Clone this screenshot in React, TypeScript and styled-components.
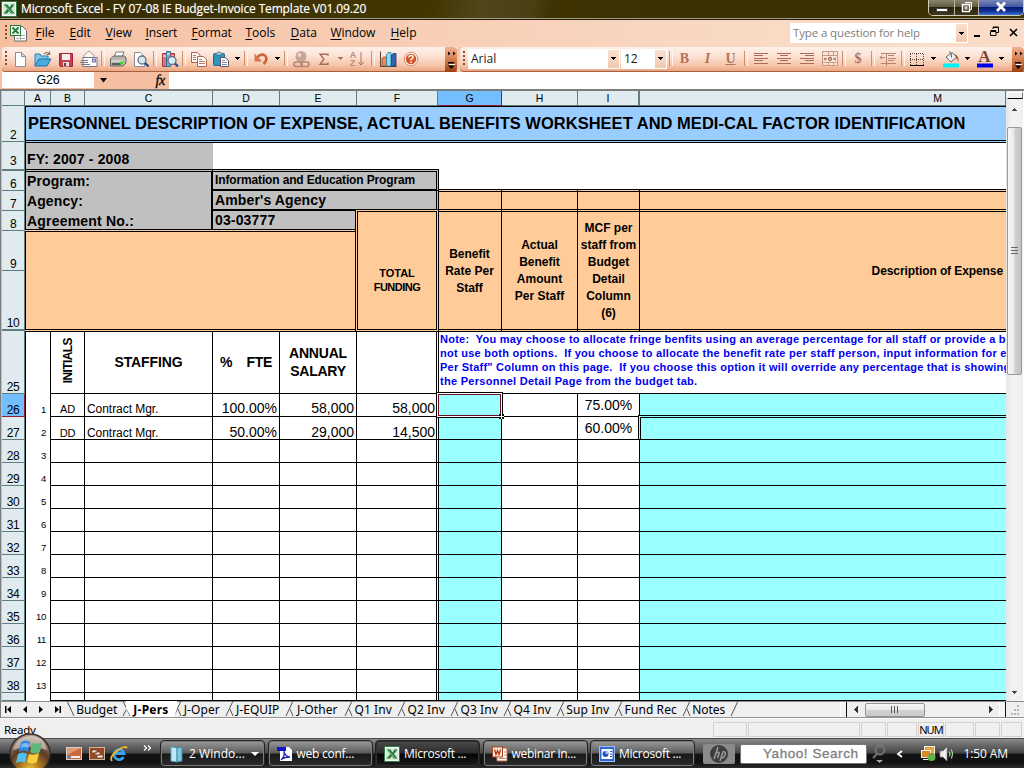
import React from "react";
import styled, { createGlobalStyle } from "styled-components";

const GlobalStyle = createGlobalStyle`
  * { box-sizing: border-box; }
  body { margin: 0; overflow: hidden; background: #efefef; }
  svg { display: block; flex: none; }
`;

const arial = `"Liberation Sans", Arial, sans-serif`;
const segoe = `"Open Sans", "Segoe UI", sans-serif`;
const tahoma = `"Noto Sans", Tahoma, sans-serif`;

const Window = styled.div`
  width: 1024px;
  height: 768px;
  display: flex;
  flex-direction: column;
  overflow: hidden;
  font-family: ${arial};
  color: #000;
  white-space: pre;
`;

const Txt = styled.span<{ $ls?: number }>`
  letter-spacing: ${(p) => p.$ls ?? 0}px;
  white-space: pre;
`;

/* ---------- title bar ---------- */
const TitleBar = styled.header`
  height: 20px;
  flex: none;
  display: flex;
  align-items: flex-start;
  background: linear-gradient(100deg, #30280a 0, #3d3202 22%, #413500 42%, #50461a 47%, #4a3f12 52%, #3d3200 54%, #3a2f00 80%, #3d3302 100%);
  border-bottom: 1px solid #1c1808;
  box-shadow: inset 0 -1px 0 #a59d86;
  padding-left: 1px;
`;
const TitleText = styled.h1`
  margin: 0 0 0 4px;
  flex: 1;
  font: 400 12px/18px ${segoe};
  letter-spacing: -0.155px;
  color: #fff;
  text-shadow: 0 0 1px rgba(255, 255, 255, 0.5);
`;
const CaptionButtons = styled.div`
  display: flex;
  width: 96px;
  height: 16px;
  border: 1px solid #cfcbbd;
  border-top: 0;
  border-radius: 0 0 5px 5px;
  overflow: hidden;
  box-shadow: inset 0 0 0 1px #1d1a0c;
`;
const CaptionButton = styled.div<{ $w: number; $close?: boolean }>`
  width: ${(p) => p.$w}px;
  display: flex;
  justify-content: center;
  border-right: 1px solid ${(p) => (p.$close ? "transparent" : "#b9b6a8")};
  background: ${(p) =>
    p.$close
      ? "linear-gradient(#7787b8 0, #4558a0 45%, #061b77 50%, #12308f 75%, #3e74d8 100%)"
      : "linear-gradient(#8a8471 0, #625b41 45%, #2a230a 50%, #3e371d 100%)"};
`;

/* ---------- menu bar ---------- */
const MenuBar = styled.nav`
  height: 27px;
  flex: none;
  display: flex;
  align-items: flex-start;
  background: linear-gradient(90deg, #f5bfa0 0, #f8ccb3 35%, #f9dac5 75%, #fadcc8 100%);
  font: 400 12px/25px ${segoe};
  padding-left: 4px;
`;
const DocIcon = styled.div`
  width: 31.500px;
  padding-top: 4px;
`;
const MenuItem = styled.div<{ $w: number; $ls: number }>`
  width: ${(p) => p.$w}px;
  letter-spacing: ${(p) => p.$ls}px;
  height: 27px;
  u { text-underline-offset: 2px; }
`;
const Spacer = styled.div`flex: 1;`;
const HelpBox = styled.div`
  width: 178px;
  height: 20px;
  margin-top: 3px;
  padding: 0 0 0 2px;
  display: flex;
  justify-content: space-between;
  background: #fff;
  border: 1px solid #fff;
  font-size: 11.5px;
  line-height: 17px;
  letter-spacing: -0.12px;
  color: #7d7d7d;
`;
const DropCap = styled.div<{ $h?: number }>`
  width: 11px;
  height: ${(p) => p.$h ?? 18}px;
  flex: none;
  display: flex;
  align-items: center;
  justify-content: center;
  background: linear-gradient(#fae0cf, #f1c8ae);
`;
const DocButtons = styled.div`
  width: 56px;
  padding: 3px 0 0 2px;
`;

/* ---------- toolbars ---------- */
const ToolbarRow = styled.div`
  height: 25px;
  flex: none;
  display: flex;
  background: #f6c6aa;
  padding-left: 2px;
`;
const Toolbar = styled.div<{ $w: number }>`
  width: ${(p) => p.$w}px;
  height: 25px;
  display: flex;
  align-items: center;
  padding-bottom: 1px;
  border-radius: 4px 0 0 4px;
  background: linear-gradient(#fef1e9 0, #fce4d6 35%, #f6c7ab 75%, #eaa682 100%);
  border-bottom: 1px solid #a85f3b;
`;
const Slot = styled.div<{ $w: number }>`
  width: ${(p) => p.$w}px;
  flex: none;
  display: flex;
  justify-content: center;
  align-items: center;
`;
const Sep = styled.i<{ $w?: number }>`
  width: ${(p) => p.$w ?? 6}px;
  height: 15px;
  flex: none;
  display: flex;
  justify-content: center;
  &::after { content: ""; width: 2px; border-left: 1px solid #cd9272; border-right: 1px solid #fff5ee; }
`;
const Grip = styled.i<{ $w?: number }>`
  width: ${(p) => p.$w ?? 6}px;
  height: 15px;
  flex: none;
  background: repeating-linear-gradient(#8e4c2e 0 2px, transparent 2px 4px) 3px 0 / 2px 14px no-repeat;
`;
const Overflow = styled.div`
  width: 12px;
  height: 25px;
  flex: none;
  margin-left: auto;
  margin-bottom: -1px;
  border-radius: 0 4px 4px 0;
  background: linear-gradient(#f2b28f 0, #d98457 45%, #993f10 100%);
`;
const ComboBox = styled.div<{ $w: number }>`
  width: ${(p) => p.$w}px;
  height: 20px;
  flex: none;
  display: flex;
  justify-content: space-between;
  border: 1px solid #fff;
  background: #fff;
  padding-left: 2px;
  margin-right: 1px;
  font: 400 12px/17px ${segoe};
  color: #221818;
`;
const Letter = styled.span<{ $i?: boolean; $u?: boolean }>`
  font: ${(p) => (p.$i ? "italic " : "")}700 14px/18px "Liberation Serif", serif;
  text-decoration: ${(p) => (p.$u ? "underline" : "none")};
  color: #b5715c;
`;

/* ---------- formula bar ---------- */
const FormulaBar = styled.div`
  height: 17px;
  flex: none;
  display: flex;
  background: #f5bfa2;
  padding-left: 2px;
`;
const NameBox = styled.div`
  width: 92px;
  height: 16px;
  background: #fff;
  text-align: center;
  font: 400 12.5px/17px ${arial};
  letter-spacing: -0.2px;
`;
const FormulaTools = styled.div`
  width: 75px;
  display: flex;
  align-items: center;
  justify-content: space-between;
  padding: 0 4px 0 5px;
  font: italic 400 14px/15px "Liberation Serif", serif;
  -webkit-text-stroke: 0.3px #000;
`;
const FormulaInput = styled.div`flex: 1; background: #fff;`;

/* ---------- worksheet ---------- */
const Work = styled.main`
  height: 612px;
  flex: none;
  display: flex;
  border-top: 2px solid #7c7c7c;
  border-left: 1px solid #7c7c7c;
  background: #fff;
`;
const Sheet = styled.div`
  width: 1005px;
  height: 610px;
  overflow: hidden;
  display: grid;
  position: relative;
  border-left: 1px solid #b7c7c9;
  grid-template-columns: 23px 26px 34px 128px 67px 77px 81px 64px 76px 62px 366px;
  grid-template-rows: 15px 36px 29px 20px 20px 20px 40px 60px 63px repeat(13, 23px) 8px;
`;
const Head = styled.div<{ $on?: boolean; $thick?: boolean }>`
  background: ${(p) => (p.$on ? "#72beff" : "#dfebef")};
  border-right: ${(p) => (p.$thick ? 2 : 1)}px solid ${(p) => (p.$on ? "#8d1f30" : "#5f7c7e")};
  border-bottom: 1px solid ${(p) => (p.$on ? "#8d1f30" : "#5f7c7e")};
  font: 400 10.5px/14px ${arial};
  text-align: center;
`;
const RowHead = styled(Head)<{ $raise?: boolean }>`
  border-right-width: 1px;
  border-bottom-width: ${(p) => (p.$thick ? 2 : 1)}px;
  display: flex;
  align-items: flex-end;
  justify-content: center;
  padding-bottom: ${(p) => (p.$raise ? 2 : 0)}px;
  font-size: 12px;
  line-height: 12px;
  letter-spacing: -0.5px;
`;

type CellProps = {
  $at: string;
  $bg?: string;
  $b?: string;
  $m?: string;
  $p?: string;
  $j?: string;
  $a?: string;
  $size?: number;
  $lh?: number;
  $bold?: boolean;
  $z?: number;
  $color?: string;
};
const Cell = styled.div<CellProps>`
  grid-area: ${(p) => p.$at};
  background: ${(p) => p.$bg ?? "transparent"};
  border-style: solid;
  border-color: #000;
  border-width: ${(p) => p.$b ?? "0 1px 1px 0"};
  margin: ${(p) => p.$m ?? 0};
  padding: ${(p) => p.$p ?? 0};
  display: flex;
  flex-direction: column;
  align-items: ${(p) => p.$j ?? "center"};
  justify-content: ${(p) => p.$a ?? "center"};
  font-size: ${(p) => p.$size ?? 14}px;
  line-height: ${(p) => (p.$lh ? p.$lh + "px" : 1.15)};
  font-weight: ${(p) => (p.$bold ? 700 : 400)};
  color: ${(p) => p.$color ?? "#000"};
  z-index: ${(p) => p.$z ?? 0};
  min-width: 0;
  min-height: 0;
  overflow: hidden;
`;
/* Any edge given 3px is drawn as two 1px rules with the fill between them. */
const DoubleCell = styled(Cell)`
  border-style: double;
`;
const Vertical = styled.span`
  writing-mode: vertical-rl;
  transform: rotate(180deg);
  font-size: 12px;
  line-height: 14px;
  letter-spacing: -0.6px;
`;
const Selection = styled.div`
  grid-area: 10 / 8;
  margin: -2px -1px -1px -2px;
  border: 1px solid #000;
  box-shadow: inset 0 0 0 1px #fff, inset 0 0 0 2px #6d1020;
  z-index: 6;
  position: relative;
  &::after {
    content: "";
    position: absolute;
    right: -2px;
    bottom: -2px;
    width: 5px;
    height: 5px;
    background: linear-gradient(#fff, #fff) center / 5px 1px no-repeat, linear-gradient(#fff, #fff) center / 1px 5px no-repeat, #000;
  }
`;

/* ---------- scrollbars ---------- */
const VScroll = styled.div`
  width: 17px;
  height: 610px;
  display: flex;
  flex-direction: column;
  align-items: center;
  background: linear-gradient(90deg, #e6e6e6, #f3f3f3 40%, #efefef);
  padding-top: 1px;
`;
const SplitBox = styled.div`
  width: 16px;
  height: 7px;
  background: #f0f0f0;
  border: 1px solid #fff;
  border-right-color: #777;
  border-bottom: 1px solid #000;
`;
const VThumb = styled.div`
  width: 15px;
  height: 248px;
  border: 1px solid #9a9a9a;
  border-radius: 2px;
  background: linear-gradient(90deg, #f7f7f7, #e9e9e9 45%, #cfcfcf 55%, #c4c4c4);
  display: flex;
  align-items: center;
  justify-content: center;
`;
const ArrowBox = styled.div<{ $h: number }>`
  height: ${(p) => p.$h}px;
  display: flex;
  align-items: center;
`;

/* ---------- tabs and status ---------- */
const TabBar = styled.div`
  height: 17px;
  flex: none;
  display: flex;
  background: #efefef;
  border-bottom: 1px solid #8f8f8f;
  border-top: 1px solid #8f8f8f;
  border-left: 1px solid #7c7c7c;
  font: 400 12px/15px ${tahoma};
`;
const NavArrows = styled.div`width: 65px;`;
const Tab = styled.div<{ $w: number; $active?: boolean; $ls?: number }>`
  width: ${(p) => p.$w}px;
  text-align: center;
  margin-top: -1px;
  height: 16px;
  line-height: 18px;
  padding-right: ${(p) => (p.$active ? 1 : 2.5)}px;
  letter-spacing: ${(p) => p.$ls ?? 0}px;
  background: ${(p) => (p.$active ? "#fff" : "transparent")};
  font-weight: ${(p) => (p.$active ? 700 : 400)};
  clip-path: ${(p) => (p.$active ? "polygon(-4px 0, 104% 0, 95% 100%, 5px 100%)" : "none")};
`;
const Slant = styled.div`
  width: 0;
  margin-top: -1px;
  svg { margin-left: -5px; }
`;
const HScroll = styled.div`
  width: 184px;
  margin-left: auto;
  display: flex;
  align-items: center;
`;
const Divider = styled.div`
  width: 7px;
  height: 15px;
  background: #f4f4f4;
  border-left: 1px solid #fff;
  border-right: 1px solid #111;
`;
const HThumb = styled.div`
  width: 60px;
  height: 14px;
  border: 1px solid #949494;
  border-radius: 2px;
  background: linear-gradient(#f6f6f6, #e8e8e8 48%, #d2d2d2 52%, #cacaca);
  display: flex;
  align-items: center;
  justify-content: center;
`;
const StatusBar = styled.div`
  height: 20px;
  flex: none;
  display: flex;
  align-items: flex-start;
  background: #efefef;
  border-top: 1px solid #fff;
  padding: 2px 1px 0 4px;
  font: 400 11.5px/18px ${tahoma};
  letter-spacing: -0.3px;
`;
const StatusCell = styled.div<{ $w: number }>`
  width: ${(p) => p.$w}px;
  height: 15px;
  margin: 1px 1px 0 0;
  border: 1px solid #d2d2d2;
  text-align: center;
  line-height: 14px;
  font-size: 11px;
  letter-spacing: -0.9px;
`;

/* ---------- taskbar ---------- */
const TaskBar = styled.footer`
  height: 30px;
  flex: none;
  display: flex;
  align-items: center;
  position: relative;
  border-top: 1px solid #4b4b4b;
  background: linear-gradient(#8c8c8c 0, #6a6a6a 20%, #464646 48%, #141414 52%, #111 80%, #2b2b2b 100%);
  padding-left: 62px;
  font: 400 12px/28px ${segoe};
  color: #fff;
`;
const StartOrb = styled.div`
  position: absolute;
  left: 8px;
  top: -6px;
`;
const TaskButton = styled.div<{ $active?: boolean }>`
  width: 105px;
  height: 27px;
  margin-right: 2.5px;
  flex: none;
  display: flex;
  align-items: center;
  padding: 0 5px 0 8px;
  border: 1px solid #232323;
  border-radius: 4px;
  box-shadow: inset 0 0 0 1px ${(p) => (p.$active ? "#2f2f2f" : "#7b7b7b")};
  background: ${(p) =>
    p.$active
      ? "linear-gradient(#4b4b4b 0, #2c2c2c 48%, #050505 52%, #1c1c1c 100%)"
      : "linear-gradient(#9a9a9a 0, #5d5d5d 48%, #191919 52%, #2c2c2c 100%)"};
`;
const TaskLabel = styled.span<{ $ls?: number }>`
  margin-left: 4px;
  flex: 1;
  line-height: 25px;
  letter-spacing: ${(p) => p.$ls ?? -0.25}px;
`;
const HpBadge = styled.div`
  width: 32px;
  height: 20px;
  border-radius: 2px;
  background: #8a8a8a;
  display: flex;
  justify-content: center;
  align-items: center;
  margin: 0 5px 0 5px;
`;
const SearchBox = styled.div`
  width: 127px;
  height: 20px;
  background: #fff;
  border: 1px solid #777;
  border-radius: 2px;
  color: #7f7f7f;
  font: 400 13.5px/18px ${arial};
  -webkit-text-stroke: 0.35px #7f7f7f;
  letter-spacing: 0.55px;
  text-align: right;
  padding-right: 7px;
`;

/* ---------- drawings ---------- */
const Tri = ({ c = "#000", d = "down" }: { c?: string; d?: "down" | "up" | "left" | "right" }) => {
  const path = { down: "M0 0h5L2.5 3z", up: "M0 3h5L2.5 0z", left: "M4 0v7L0 3.5z", right: "M0 0v7l4-3.5z" }[d];
  return (
    <svg width={5} height={d === "down" || d === "up" ? 3 : 7} shapeRendering="crispEdges">
      <path d={path} fill={c} />
    </svg>
  );
};

const ExcelIcon = ({ s = 16 }: { s?: number }) => (
  <svg width={s} height={s} viewBox="0 0 16 16">
    <rect x=".5" y=".5" width="15" height="15" fill="#f4fbf4" stroke="#2c7a42" />
    <rect x="2" y="2" width="12" height="12" fill="#d5e9d6" />
    <path d="M2.500 3.500h4l2 3 2-3h3L10 8l3.500 4.500h-4L8 10l-2 2.500H2.500L6.500 8z" fill="#227c3a" />
    <path d="M4 4.500l7 7.500" stroke="#8fc89a" strokeWidth="1" />
  </svg>
);

const svg16 = (children: React.ReactNode, w = 18, h = 18) => (
  <svg width={w} height={h} viewBox={`0 0 ${w} ${h}`}>{children}</svg>
);

const icons: Record<string, React.ReactNode> = {
  fresh: svg16(<><path d="M4.500 2.500h6l4 4v10h-10z" fill="#fff" stroke="#8d8d95" /><path d="M10.500 2.500v4h4z" fill="#ddd" stroke="#8d8d95" /></>),
  open: svg16(<><path d="M1 16V4h5l1 2h7v3" fill="#7cc4ea" stroke="#2b80b8" /><path d="M1 16l4-7h12l-4 7z" fill="#4aa9df" stroke="#1f75ad" /><path d="M10 4q3-3 5 0M15.500 1.500v3h-3" fill="none" stroke="#7d6a5c" strokeWidth="1.200" /></>),
  save: svg16(<><path d="M2.500 3.500h13v13h-12l-1-1z" fill="#c8404c" stroke="#a02534" /><rect x="5" y="4" width="8" height="6" fill="#f7eef0" /><rect x="6" y="12" width="6" height="4.500" fill="#e5dde0" /><rect x="7" y="13" width="2" height="3" fill="#7b3540" /></>),
  mail: svg16(<><path d="M4 8V5l5-4 5 4v3" fill="#faf4f0" stroke="#aaa0a0" /><rect x="3" y="7.500" width="14" height="9" fill="#fff" stroke="#777a90" /><rect x="12.500" y="9" width="3" height="3" fill="#c9cde6" stroke="#51609c" strokeWidth=".8" /><path d="M1 10.500h7M0 12.500h8M1 14.500h9" stroke="#7e7a86" /></>),
  print: svg16(<><path d="M5 7l2-5h8l-2 5z" fill="#fff" stroke="#777" /><path d="M1.500 9l3-3h11l1.500 2v5l-3 3h-12.500z" fill="#b9b5b1" stroke="#66615e" /><path d="M2 11h12" stroke="#efebe6" /><path d="M3 14h9" stroke="#444" strokeWidth="1.500" /><rect x="11" y="11.500" width="3" height="3" fill="#35dd35" /></>),
  preview: svg16(<><path d="M2.500 2.500h6l4 4v10h-10z" fill="#fff" stroke="#8d8d95" /><circle cx="10" cy="10" r="4" fill="#cfe9f5" stroke="#676f78" strokeWidth="1.300" /><path d="M13 13l3.500 3.500" stroke="#2b4f97" strokeWidth="2.400" /></>),
  research: svg16(<><path d="M1.500 3.500h4v13h-4z" fill="#d9767c" stroke="#9e3843" /><path d="M5.500 1.500h4v15h-4z" fill="#67aee0" stroke="#346fa0" /><path d="M9.500 3.500h4v8h-4z" fill="#d9767c" stroke="#9e3843" /><path d="M2 6h3M6 4h3M10 6h3" stroke="#fff" /><circle cx="11" cy="10.500" r="4" fill="#d5ecf6" stroke="#676f78" strokeWidth="1.300" /><path d="M14 13.500l3 3" stroke="#2b4f97" strokeWidth="2.400" /></>),
  copy: svg16(<><path d="M1.500 2.500h6l2.500 2.500v7.500h-8.500z" fill="#fff6ef" stroke="#b0664d" /><path d="M7.500 6.500h6l3 3v7h-9z" fill="#fff" stroke="#b0664d" /><path d="M3 5.500h3M3 7.500h3M3 9.500h3M9 9.500h3M9 11.500h6M9 13.500h6" stroke="#bf7c66" /></>),
  paste: svg16(<><rect x="1.500" y="3.500" width="11" height="12" rx="1" fill="#2c97bb" stroke="#1b6d91" /><path d="M4 5V3h2q1-3 2 0h2v2z" fill="#bfe3ef" stroke="#376b80" strokeWidth=".8" /><path d="M8.500 7.500h4.500l3.500 3v6h-8z" fill="#fff" stroke="#5a5668" /><path d="M10 10.500h3M10 12.500h5M10 14.500h5" stroke="#8a8796" /></>),
  undo: svg16(<><path d="M5 7.500q4-4.500 8-2q3.500 4-1.500 8.500" fill="none" stroke="#d06237" strokeWidth="2.600" /><path d="M2.500 3.500v8h7.500z" fill="#d9734a" /></>),
  link: svg16(<><circle cx="9" cy="6.500" r="5.500" fill="#c9a497" /><circle cx="7.500" cy="5" r="2" fill="#ead4ca" /><rect x="2" y="12" width="8" height="4.500" rx="2.200" fill="none" stroke="#b18476" strokeWidth="1.600" /><rect x="9" y="12" width="8" height="4.500" rx="2.200" fill="none" stroke="#b18476" strokeWidth="1.600" /></>),
  sum: svg16(<path d="M13 5.800V4.300H5L9 9.300 5 14.200h8v-1.700" fill="none" stroke="#aa6c58" strokeWidth="1.400" />),
  chart: svg16(<><path d="M1.500 1.500v15h16" fill="none" stroke="#54443f" /><path d="M3 8.500l1.500-1.500h3V16H3z" fill="#f08a4b" stroke="#994620" strokeWidth=".8" /><path d="M7.500 4.500L9 2.500h3V16H7.500z" fill="#8fd8f0" stroke="#2680a8" strokeWidth=".8" /><path d="M12.500 5l1.500-1.500h3V16h-4.500z" fill="#3564ae" stroke="#1a376e" strokeWidth=".8" /></>),
  help: svg16(<><circle cx="9" cy="9" r="6.700" fill="#fff" stroke="#d88d6c" /><circle cx="9" cy="9" r="5.300" fill="#d6562a" /><path d="M7 7.500q0-2 2-2t2 1.700q0 1-2 2.200v1M9 11.500v1.500" fill="none" stroke="#fff" strokeWidth="1.400" /></>),
  left: svg16(<path d="M2 3.500h14M2 5.500h9M2 8.500h14M2 10.500h9M2 13.500h14" stroke="#aa6c58" />),
  center: svg16(<path d="M2 3.500h14M5 5.500h8M2 8.500h14M5 10.500h8M2 13.500h14" stroke="#aa6c58" />),
  right: svg16(<path d="M2 3.500h14M7 5.500h9M2 8.500h14M7 10.500h9M2 13.500h14" stroke="#aa6c58" />),
  merge: svg16(<><rect x="1.500" y="1.500" width="15" height="14" fill="#fbe6da" stroke="#c79a88" /><path d="M1 5.500h16M1 12.500h16M7.500 1v4M12.500 1v4M7.500 13v3M12.500 13v3" stroke="#c79a88" /><path d="M3 9h3M4 7.500v3M15 9h-3M14 7.500v3" stroke="#aa6c58" /><circle cx="9" cy="9" r="1.500" fill="none" stroke="#aa6c58" strokeWidth="1.300" /></>),
  indent: svg16(<path d="M2 3.500h15M9 5.500h6M9 8.500h8M9 10.500h6M2 13.500h15M1 7.500h5M3 5.500l-2 2 2 2M7.500 3v13" stroke="#b88270" fill="none" />),
  borders: svg16(<><path d="M2 3.500h14M2 9.500h14M2.500 4v12M8.500 4v12M15.500 4v12" stroke="#5d4a42" strokeDasharray="1 1" /><path d="M2 15.500h14" stroke="#000" strokeWidth="1" /></>),
  fill: svg16(<><path d="M4 7l6-4.500 5 4.500-6 5z" fill="#eef0f0" stroke="#666" /><path d="M7 1.500q3 1 2.500 6" stroke="#555" fill="none" /><path d="M13 4q4 2 3.500 8q-2-4-3-5z" fill="#b5522d" /><rect x="1" y="13.500" width="16" height="4" fill="#00f4f4" /></>),
  font: svg16(<rect x="1" y="13.500" width="16" height="4" fill="#0000f0" />),
};

const Sort = styled.div`
  display: flex;
  align-items: center;
  font: 700 9px/8px ${arial};
  color: #bd8b79;
  white-space: pre;
`;
const FontColor = styled.div`
  display: grid;
  > * { grid-area: 1 / 1; }
  span { font: 700 17px/14px "Liberation Serif", serif; color: #7b4439; text-align: center; }
`;

const OverflowMark = () => (
  <svg width={12} height={24}>
    <path d="M3 4.500l2.500 2L3 8.500zM8 4.500l2.500 2L8 8.500zM3 15h6v1.500H3zM3 18.500h6.500L6.200 22z" fill="#000" />
    <path d="M4 17.500h6" stroke="#fff" />
  </svg>
);

/* ---------- data ---------- */
const menus: [string, string, number, number][] = [
  ["F", "ile", 34, 0], ["E", "dit", 36, 0], ["V", "iew", 40, 0], ["I", "nsert", 46, -0.1], ["F", "ormat", 54, 0],
  ["T", "ools", 45, 0], ["D", "ata", 40, 0], ["W", "indow", 60, -0.1], ["H", "elp", 40, 0],
];
const staff = [
  { initials: "AD", title: "Contract Mgr.", fte: "100.00%", salary: "58,000", total: "58,000", mcf: "75.00%" },
  { initials: "DD", title: "Contract Mgr.", fte: "50.00%", salary: "29,000", total: "14,500", mcf: "60.00%" },
];
const rowHeads = ["2", "3", "6", "7", "8", "9", "10", ...Array.from({ length: 14 }, (_, i) => String(25 + i)), ""];
const colHeads = ["", "A", "B", "C", "D", "E", "F", "G", "H", "I"];
const tabs: [string, number, number][] = [
  ["Budget", 56, 0], ["J-Pers", 51, 0.25], ["J-Oper", 52, 0.1], ["J-EQUIP", 60, 0], ["J-Other", 59, 0.1], ["Q1 Inv", 53, 0.1],
  ["Q2 Inv", 53, 0.1], ["Q3 Inv", 53, 0.1], ["Q4 Inv", 53, 0.1], ["Sup Inv", 58, 0.1], ["Fund Rec", 68, 0.1], ["Notes", 48, 0],
];
const notes: [string, number][] = [
  ["Note:  You may choose to allocate fringe benfits using an average percentage for all staff or provide a b", 0.24],
  ["not use both options.  If you choose to allocate the benefit rate per staff person, input information for e", 0.27],
  ["Per Staff\" Column on this page.  If you choose this option it will override any percentage that is showing", 0.235],
  ["the Personnel Detail Page from the budget tab.", 0.28],
];

const ORANGE = "#ffcc99";
const GRAY = "#c0c0c0";
const CYAN = "#99ffff";

const Worksheet = () => (
  <Sheet>
    {colHeads.map((c, i) => (
      <Head key={i} style={{ gridArea: `1 / ${i + 1}` }} $on={c === "G"} $thick={c === "I"}>{c}</Head>
    ))}
    <Head style={{ gridArea: "1 / 11", paddingLeft: 230 }}>M</Head>
    {rowHeads.map((r, i) => (
      <RowHead key={i} style={{ gridArea: `${i + 2} / 1` }} $on={r === "26"} $thick={r === "3" || r === "10"} $raise={r === "3"}>{r}</RowHead>
    ))}

    <DoubleCell $at="2 / 2 / 3 / 12" $bg="#99ccff" $b="1px 0 3px 1px" $m="0 0 -1px 0" $j="flex-start" $p="0 0 0 2px" $size={16.5} $bold $z={2}>
      <Txt $ls={0.015}>PERSONNEL DESCRIPTION OF EXPENSE, ACTUAL BENEFITS WORKSHEET AND MEDI-CAL FACTOR IDENTIFICATION</Txt>
    </DoubleCell>
    <Cell $at="3 / 2 / 4 / 5" $bg={GRAY} $b="0 0 0 1px" $j="flex-start" $a="flex-end" $p="0 0 4px 1px" $size={14} $bold><Txt $ls={0.15}>FY: 2007 - 2008</Txt></Cell>

    <DoubleCell $at="4 / 2 / 7 / 5" $bg={GRAY} $b="3px 2px 0 1px" $m="-2px 0 0 0" $j="flex-start" $p="0 0 0 1px" $a="flex-end" $size={14} $lh={20} $bold>
      <Txt $ls={0.1}>Program:</Txt><Txt $ls={0.1}>Agency:</Txt><Txt $ls={0.2}>Agreement No.:</Txt>
    </DoubleCell>
    <DoubleCell $at="4 / 5 / 5 / 8" $bg={GRAY} $b="3px 3px 2px 0" $m="-2px -1px 0 0" $j="flex-start" $p="0 0 0 2px" $size={12} $bold $z={3}><Txt $ls={-0.14}>Information and Education Program</Txt></DoubleCell>
    <DoubleCell $at="5 / 5 / 6 / 8" $bg={GRAY} $b="0 3px 2px 0" $m="0 -1px 0 0" $j="flex-start" $p="0 0 0 2px" $size={14} $bold $z={3}><Txt $ls={0.12}>Amber's Agency</Txt></DoubleCell>
    <Cell $at="6 / 5 / 7 / 7" $bg={GRAY} $b="0 1px 0 0" $m="0 1px 0 0" $j="flex-start" $p="0 0 2px 2px" $size={14} $bold $z={1}><Txt $ls={0.15}>03-03777</Txt></Cell>

    {[8, 9, 10, 11].map((c) => (
      <DoubleCell key={c} $at={`5 / ${c}`} $bg={ORANGE} $b={c === 11 ? "3px 0 0 0" : "3px 1px 0 0"} $m="-2px 0 0 0" $z={2} />
    ))}
    <DoubleCell $at="7 / 2 / 9 / 7" $bg={ORANGE} $b="3px 1px 3px 1px" $m="-2px 1px -1px 0" $z={2} />
    <DoubleCell $at="6 / 7 / 9 / 8" $bg={ORANGE} $b="3px 3px 3px 3px" $m="-2px -1px -1px -2px" $p="19px 0 0 0" $size={11} $lh={14} $bold $z={4}>
      <Txt $ls={0}>TOTAL</Txt><Txt $ls={-0.5}>FUNDING</Txt>
    </DoubleCell>
    {[
      ["Benefit", "Rate Per", "Staff"],
      ["Actual", "Benefit", "Amount", "Per Staff"],
      ["MCF per", "staff from", "Budget", "Detail", "Column", "(6)"],
    ].map((lines, i) => (
      <DoubleCell key={i} $at={`6 / ${8 + i} / 9 / ${9 + i}`} $bg={ORANGE} $b="3px 1px 3px 0" $m="-2px 0 -1px 0" $p={i === 0 ? "2px 0 0 0" : "0"} $size={12} $lh={17} $bold $z={3}>
        {lines.map((l) => <Txt key={l}>{l}</Txt>)}
      </DoubleCell>
    ))}
    <DoubleCell $at="6 / 11 / 9 / 12" $bg={ORANGE} $b="3px 0 3px 0" $m="-2px 0 -1px 0" $j="flex-end" $p="2px 3px 0 0" $size={12} $lh={17} $bold $z={3}>
      <Txt $ls={-0.09}>Description of Expense</Txt>
    </DoubleCell>

    <Cell $at="9 / 2" $b="0 1px 0 1px" />
    <Cell $at="9 / 3" $bold $p="0 0 3px 0"><Vertical>INITIALS</Vertical></Cell>
    <Cell $at="9 / 4" $bold $size={14}><Txt $ls={-0.1}>STAFFING</Txt></Cell>
    <Cell $at="9 / 5" $bold $size={14}><Txt $ls={-0.3}>{"%    FTE"}</Txt></Cell>
    <Cell $at="9 / 6" $bold $size={14} $lh={18}><Txt $ls={-0.2}>ANNUAL</Txt><Txt $ls={-0.25}>SALARY</Txt></Cell>
    <DoubleCell $at="9 / 7" $b="0 3px 1px 0" $m="0 -1px 0 0" $z={3} />
    <Cell $at="9 / 8 / 10 / 12" $b="0 0 1px 0" $j="flex-start" $a="flex-start" $p="1px 0 0 2px" $size={11} $lh={14} $bold $color="#0000f0">
      {notes.map(([t, ls]) => <Txt key={t} $ls={ls}>{t}</Txt>)}
    </Cell>

    {Array.from({ length: 14 }, (_, i) => {
      const r = 10 + i;
      const s = staff[i];
      const low = i === 1;
      return (
        <React.Fragment key={r}>
          <Cell $at={`${r} / 2`} $b="0 1px 0 1px" $size={9.5} $j="flex-end" $a="flex-end" $p="0 4px 1px 0">{i < 13 && <Txt $ls={-0.3}>{i + 1}</Txt>}</Cell>
          <Cell $at={`${r} / 3`} $size={11} $a="flex-end" $lh={low ? 11 : 13}><Txt $ls={-0.2}>{s?.initials}</Txt></Cell>
          <Cell $at={`${r} / 4`} $size={12} $j="flex-start" $a="flex-end" $p="0 0 0 2px" $lh={low ? 11 : 13}><Txt $ls={-0.05}>{s?.title}</Txt></Cell>
          <Cell $at={`${r} / 5`} $size={14} $j="flex-end" $a="flex-end" $p="0 2px 0 0" $lh={low ? 14 : 16}><Txt>{s?.fte}</Txt></Cell>
          <Cell $at={`${r} / 6`} $size={14} $j="flex-end" $a="flex-end" $p="0 2px 0 0" $lh={low ? 14 : 16}><Txt>{s?.salary}</Txt></Cell>
          <DoubleCell $at={`${r} / 7`} $size={14} $j="flex-end" $a="flex-end" $b="0 3px 1px 0" $m="0 -1px 0 0" $p="0 1px 0 0" $lh={low ? 14 : 16} $z={3}><Txt>{s?.total}</Txt></DoubleCell>
          <Cell $at={`${r} / 8`} $bg={CYAN} />
          <Cell $at={`${r} / 9`} />
          <Cell $at={`${r} / 10`} $size={14}><Txt>{s?.mcf}</Txt></Cell>
          {low
            ? <DoubleCell $at={`${r} / 11`} $bg={CYAN} $b="3px 0 1px 3px" $m="-2px 0 0 -2px" $z={4} />
            : <Cell $at={`${r} / 11`} $bg={CYAN} $b="0 0 1px 0" />}
        </React.Fragment>
      );
    })}
    <Selection />
  </Sheet>
);

const SlantMark = ({ back, last }: { back?: boolean; last?: boolean }) => (
  <svg width={11} height={16} fill="none" stroke="#555">
    {back ? <path d="M2 0l7 15" /> : <path d="M9 0L2 15" />}
    {!last && (back ? <path d="M5 9l-3 6" /> : <path d="M6 8l3 7" />)}
  </svg>
);

const TaskIcon = ({ kind }: { kind: string }) => {
  if (kind === "folder") return <svg width={16} height={18}><path d="M2 2l6 1v14l-6-1z" fill="#bdeaf6" stroke="#58a8c2" /><path d="M8 3l5-1v14l-5 1z" fill="#7cc8df" stroke="#3e8ca8" /></svg>;
  if (kind === "pdf") return <svg width={16} height={16}><path d="M3 1h9l3 3v11H3z" fill="#fff" /><path d="M0 1h9v4H0z" fill="#0b16c8" /><path d="M7 5q1 6-3 9M7 6q2 5 6 5q-5 0-8 2" stroke="#1b25b8" fill="none" strokeWidth="1.300" /></svg>;
  if (kind === "excel") return <ExcelIcon />;
  if (kind === "ppt") return <svg width={16} height={16}><path d="M4 2h11v13H5z" fill="#fff" stroke="#b5613c" /><rect x=".5" y="1" width="10" height="10" fill="#fbe9e0" stroke="#a9431b" /><path d="M2.500 3.500l1.500 5 1.500-4 1.500 4 1.500-5" stroke="#b3380d" fill="none" strokeWidth="1.300" /><path d="M12 6h2M12 9h2M7 12.500h7" stroke="#c68468" /></svg>;
  return <svg width={16} height={16}><rect x=".5" y=".5" width="15" height="15" fill="#3268d2" stroke="#9dbcf5" /><rect x="2.500" y="3" width="11" height="10" fill="#fff" /><circle cx="6.500" cy="8" r="3" fill="#2853b8" /><path d="M6.500 8V4.500A3.500 3.500 0 0 1 10 8z" fill="#9fc0f7" /><path d="M11 5.500h2M11 8h2M11 10.500h2" stroke="#2853b8" /></svg>;
};

export default function App() {
  return (
    <Window>
      <GlobalStyle />
      <TitleBar>
        <Slot $w={16} style={{ marginTop: 1 }}><ExcelIcon /></Slot>
        <TitleText>Microsoft Excel - FY 07-08 IE Budget-Invoice Template V01.09.20</TitleText>
        <CaptionButtons>
          <CaptionButton $w={26}><svg width={14} height={15}><rect x="1.500" y="8.500" width="11" height="3" fill="#fff" stroke="#444" /></svg></CaptionButton>
          <CaptionButton $w={24}><svg width={14} height={15} fill="none" stroke="#fff"><path d="M5 2.500h6.500v7H10" /><rect x="2.500" y="4.500" width="7" height="7" strokeWidth="1.500" /><rect x="5" y="7" width="2" height="2" /></svg></CaptionButton>
          <CaptionButton $w={44} $close><svg width={14} height={15} stroke="#fff" strokeWidth="2.600"><path d="M3 2.500l8 8.500M11 2.500L3 11" /></svg></CaptionButton>
        </CaptionButtons>
      </TitleBar>

      <MenuBar>
        <DocIcon>
          <svg width={24} height={18}>
            <path d="M2 1v16" stroke="#8e4c2e" strokeWidth="2" strokeDasharray="2 2" />
            <path d="M10.500 2.500h8l4 4v10.500h-12z" fill="#fff" stroke="#6c6a66" />
            <path d="M12 11.500h9M12 14.500h9M16.500 6v11" stroke="#aaa" />
            <rect x="6.500" y="1.500" width="10" height="10" fill="#ecf6ec" stroke="#2c7a42" />
            <path d="M8.500 3.500l6 6M14.500 3.500l-6 6" stroke="#227c3a" strokeWidth="1.800" />
          </svg>
        </DocIcon>
        {menus.map(([k, rest, w, ls]) => (
          <MenuItem key={k + rest} $w={w} $ls={ls}><u>{k}</u>{rest}</MenuItem>
        ))}
        <Spacer />
        <HelpBox>Type a question for help<DropCap><Tri /></DropCap></HelpBox>
        <DocButtons>
          <svg width={50} height={20} fill="none" stroke="#000">
            <path d="M4 13h6" strokeWidth="2" />
            <path d="M23 6v-1.500h5.500v5H26" /><path d="M20.500 8.500h5.500v4h-5.500zM20.500 7.500h5.500M23 4h5.500" />
            <path d="M40 6l7 7M47 6l-7 7" strokeWidth="1.600" />
          </svg>
        </DocButtons>
      </MenuBar>

      <ToolbarRow>
        <Toolbar $w={455}>
          <Grip />
          <Slot $w={23}>{icons.fresh}</Slot><Slot $w={23}>{icons.open}</Slot><Slot $w={23}>{icons.save}</Slot><Slot $w={23}>{icons.mail}</Slot>
          <Sep />
          <Slot $w={23}>{icons.print}</Slot><Slot $w={23}>{icons.preview}</Slot>
          <Sep />
          <Slot $w={23}>{icons.research}</Slot>
          <Sep />
          <Slot $w={23}>{icons.copy}</Slot><Slot $w={22}>{icons.paste}</Slot><Slot $w={10}><Tri /></Slot>
          <Sep $w={8} />
          <Slot $w={22}>{icons.undo}</Slot><Slot $w={10}><Tri /></Slot>
          <Sep $w={8} />
          <Slot $w={22}>{icons.link}</Slot><Slot $w={23}>{icons.sum}</Slot><Slot $w={11}><Tri c="#a87663" /></Slot>
          <Slot $w={23}>
            <Sort>{"A\nZ"}<svg width={9} height={16} stroke="#b5715c" fill="none"><path d="M5 1v13M2 11l3 3 3-3" /></svg></Sort>
          </Slot>
          <Sep $w={7} />
          <Slot $w={23}>{icons.chart}</Slot><Slot $w={23}>{icons.help}</Slot>
          <Overflow><OverflowMark /></Overflow>
        </Toolbar>
        <Toolbar $w={564} style={{ marginLeft: 3 }}>
          <Grip $w={8} />
          <ComboBox $w={152}>Arial<DropCap><Tri /></DropCap></ComboBox>
          <ComboBox $w={46}>12<DropCap><Tri /></DropCap></ComboBox>
          <Sep $w={5} />
          <Slot $w={23}><Letter>B</Letter></Slot><Slot $w={23}><Letter $i>I</Letter></Slot><Slot $w={23}><Letter $u>U</Letter></Slot>
          <Sep $w={7} />
          <Slot $w={23}>{icons.left}</Slot><Slot $w={23}>{icons.center}</Slot><Slot $w={23}>{icons.right}</Slot><Slot $w={23}>{icons.merge}</Slot>
          <Sep />
          <Slot $w={22}><Letter>$</Letter></Slot>
          <Sep $w={7} />
          <Slot $w={23}>{icons.indent}</Slot>
          <Sep $w={7} />
          <Slot $w={22}>{icons.borders}</Slot><Slot $w={10}><Tri /></Slot>
          <Slot $w={25}>{icons.fill}</Slot><Slot $w={9}><Tri /></Slot>
          <Slot $w={25}><FontColor><span>A</span>{icons.font}</FontColor></Slot><Slot $w={9}><Tri /></Slot>
          <Overflow><OverflowMark /></Overflow>
        </Toolbar>
      </ToolbarRow>

      <FormulaBar>
        <NameBox>G26</NameBox>
        <FormulaTools><svg width={9} height={5}><path d="M1 0h7L4.500 4.500z" /></svg><Txt $ls={-0.3}>fx</Txt></FormulaTools>
        <FormulaInput />
      </FormulaBar>

      <Work>
        <Worksheet />
        <VScroll>
          <SplitBox />
          <ArrowBox $h={20}><Tri d="up" c="#444" /></ArrowBox>
          <Spacer style={{ flex: "none", height: 8 }} />
          <VThumb><svg width={7} height={8} stroke="#666"><path d="M0 .5h7M0 3.500h7M0 6.500h7" /></svg></VThumb>
          <Spacer />
          <ArrowBox $h={17}><Tri c="#444" /></ArrowBox>
        </VScroll>
      </Work>

      <TabBar>
        <NavArrows>
          <svg width={64} height={15}>
            <path d="M4 4h1.500v7H4zM10 4v7L6 7.500zM26 4v7l-4-3.500zM38 4v7l4-3.500zM54 4v7l4-3.500zM58.500 4H60v7h-1.500z" />
          </svg>
        </NavArrows>
        <Spacer style={{ flex: "none", width: 4 }} />
        <Slant><SlantMark back last /></Slant>
        {tabs.map(([t, w, ls], i) => (
          <React.Fragment key={t}>
            <Tab $w={w} $ls={ls} $active={i === 1}>{t}</Tab>
            <Slant><SlantMark back={i === 0} last={i === tabs.length - 1} /></Slant>
          </React.Fragment>
        ))}
        <HScroll>
          <Divider />
          <Slot $w={18}><Tri d="left" c="#333" /></Slot>
          <HThumb><svg width={8} height={7} stroke="#555"><path d="M.5 0v7M3.500 0v7M6.500 0v7" /></svg></HThumb>
          <Spacer />
          <Slot $w={16}><Tri d="right" c="#333" /></Slot>
          <Divider />
          <Slot $w={18}><svg width={10} height={10} fill="#b5b5b5"><path d="M7 0h2v2H7zM4 4h2v2H4zM7 4h2v2H7zM1 8h2v2H1zM4 8h2v2H4zM7 8h2v2H7z" /></svg></Slot>
        </HScroll>
      </TabBar>
      <StatusBar>
        <span>Ready</span>
        <Spacer />
        {[34, 112, 25, 30, 26, 29, 25, 21].map((w, i) => <StatusCell key={i} $w={w}>{i === 4 ? "NUM" : ""}</StatusCell>)}
      </StatusBar>

      <TaskBar>
        <StartOrb>
          <svg width={44} height={44} viewBox="0 0 44 44">
            <defs>
              <radialGradient id="orb" cx=".5" cy=".9" r=".9">
                <stop offset="0" stopColor="#f5c53a" /><stop offset=".3" stopColor="#a87420" /><stop offset=".6" stopColor="#5c3a26" /><stop offset="1" stopColor="#b8a79a" />
              </radialGradient>
            </defs>
            <circle cx="22" cy="21" r="20" fill="url(#orb)" stroke="#35302c" strokeWidth="1.500" />
            <path d="M5 17Q9 4 22 3t17 14q-17-6-34 0z" fill="#fff" opacity=".45" />
            <path d="M13 9q5-3 9 0l-2 10q-4-3-9 0z" fill="#2f8be8" />
            <path d="M24 10q5 2 10-1l-2 10q-5 3-10 0z" fill="#5fb57a" />
            <path d="M10 21q5-3 9 0l-2 9q-4-3-9 0z" fill="#4fc0ef" />
            <path d="M21 21q5 2 10-1l-2 9q-5 3-10 0z" fill="#f6cf3c" />
            <path d="M14 11q4-2 7 0l-1 4q-4-2-7 0z" fill="#fff" opacity=".4" />
          </svg>
        </StartOrb>
        <Slot $w={23}><svg width={16} height={13}><rect x=".5" y=".5" width="15" height="12" fill="#c76b3d" stroke="#d9d2cc" /><path d="M1 1h14L1 8z" fill="#e29a72" /><rect x="5" y="9" width="9" height="2" fill="#f0ece8" /><circle cx="3" cy="10" r="1.500" fill="#58c" /></svg></Slot>
        <Slot $w={23}><svg width={16} height={13}><rect x=".5" y=".5" width="15" height="12" fill="#9a4a22" stroke="#cdb2a2" /><path d="M3 3h5v3H3zM6 5h5v3H6zM8 8h6v3H8z" fill="#f6ede7" stroke="#6d3517" strokeWidth=".7" /></svg></Slot>
        <Slot $w={22}><svg width={18} height={18}><path d="M13.500 12A5 5 0 1 1 14 8.500H5" fill="none" stroke="#36a4ec" strokeWidth="2.800" /><path d="M2 16Q-1 12 7 6t10-3" fill="none" stroke="#f1b52c" strokeWidth="1.800" /></svg></Slot>
        <Slot $w={29} style={{ alignSelf: "flex-start", marginTop: 6, paddingLeft: 6 }}><svg width={9} height={6} fill="none" stroke="#fff" strokeWidth="1.200"><path d="M1 .5L3.500 3 1 5.500M5 .5L7.500 3 5 5.500" /></svg></Slot>
        <Slot $w={1} />
        <TaskButton><TaskIcon kind="folder" /><TaskLabel $ls={0.05}>2 Windo...</TaskLabel><svg width={8} height={4} fill="#fff"><path d="M0 0h8L4 4z" /></svg></TaskButton>
        <TaskButton><TaskIcon kind="pdf" /><TaskLabel>web conf...</TaskLabel></TaskButton>
        <TaskButton $active><TaskIcon kind="excel" /><TaskLabel>Microsoft ...</TaskLabel></TaskButton>
        <TaskButton><TaskIcon kind="ppt" /><TaskLabel $ls={-0.3}>webinar in...</TaskLabel></TaskButton>
        <TaskButton><TaskIcon kind="chart" /><TaskLabel>Microsoft ...</TaskLabel></TaskButton>
        <HpBadge><svg width={22} height={20}><circle cx="11" cy="10" r="9" fill="#3d3d3d" /><path d="M10 3L6 15M8 9q4-2 3 1l-1.500 4M15 8l-3 9M14.500 8q4-1 2.500 3t-4 2" fill="none" stroke="#9a9a9a" strokeWidth="1.500" /></svg></HpBadge>
        <SearchBox>Yahoo! Search</SearchBox>
        <Slot $w={24}><svg width={16} height={20} fill="none" stroke="#777"><circle cx="9" cy="6" r="4.500" strokeWidth="1.800" /><path d="M6 10l-4 4" strokeWidth="2" /><path d="M5 16h7l-3.500 3z" fill="#aaa" stroke="none" /></svg></Slot>
        <Slot $w={18}><svg width={7} height={8} fill="none" stroke="#fff" strokeWidth="1.800"><path d="M6 1L2 4l4 3" /></svg></Slot>
        <Slot $w={38}>
          <svg width={16} height={16}><rect x="4.500" y=".5" width="10" height="8" fill="#e8a437" stroke="#eee" /><rect x="1.500" y="4.500" width="9" height="7" fill="#d98a20" stroke="#eee" /><circle cx="11.500" cy="11" r="4" fill="#5fb54a" /><path d="M8.500 9q3-3 5 0z" fill="#dd5533" /><path d="M3 13.500h5" stroke="#eee" /></svg>
        </Slot>
        <svg width={17} height={16} style={{ marginLeft: -8 }}><path d="M1 5h3l4-4v14l-4-4H1z" fill="#eee" stroke="#888" strokeWidth=".7" /><path d="M10 5.500q2 2.500 0 5M12 3.500q3 4.500 0 9" fill="none" stroke="#9fd68c" strokeWidth="1.200" /></svg>
        <Txt $ls={-0.1} style={{ marginLeft: 8 }}>1:50 AM</Txt>
      </TaskBar>
    </Window>
  );
}
